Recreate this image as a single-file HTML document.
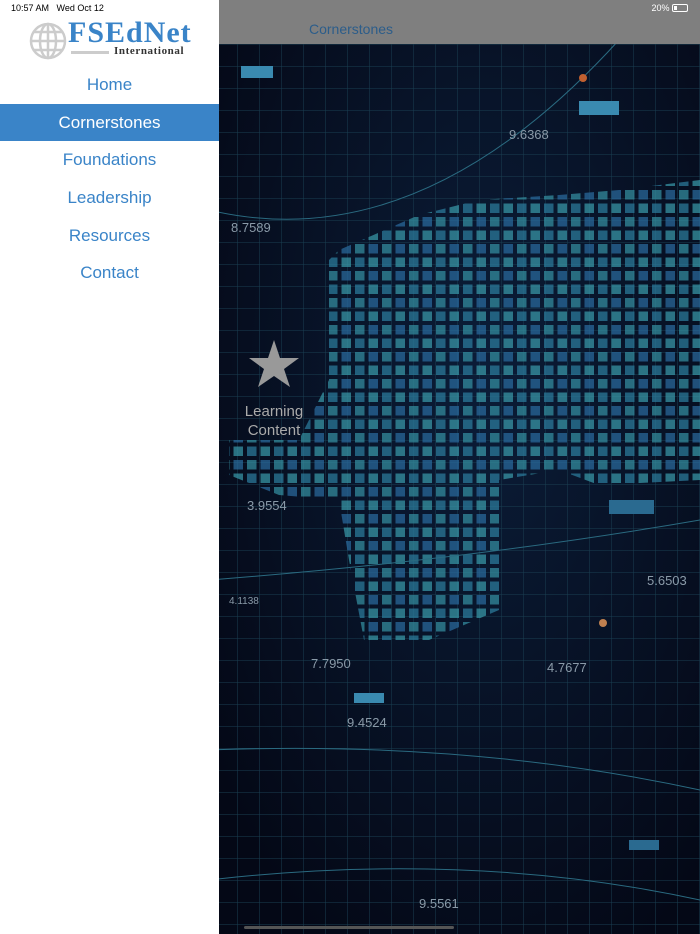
<!DOCTYPE html>
<html><head><meta charset="utf-8"><style>
*{margin:0;padding:0;box-sizing:border-box}
body{width:700px;height:934px;overflow:hidden;position:relative;font-family:"Liberation Sans",sans-serif;background:#fff}
.side{position:absolute;left:0;top:0;width:219px;height:934px;background:#fff}
.nav{position:absolute;left:0;width:219px;text-align:center;font-size:17px;color:#3a84c8}
.sel{background:#3a84c8;color:#fff}
.main{position:absolute;left:219px;top:0;width:481px;height:934px;background:#050c1c;overflow:hidden}
.hdr{position:absolute;left:219px;top:0;width:481px;height:44px;background:#7f7f7f}
</style></head><body>
<div class="main">
<svg width="481" height="934" style="position:absolute;left:0;top:0">
<defs>
<radialGradient id="g" cx="0.55" cy="0.4" r="0.7"><stop offset="0" stop-color="#0b1d38"/><stop offset="1" stop-color="#040816"/></radialGradient>
<pattern id="gr" width="22" height="22" patternUnits="userSpaceOnUse" x="-4" y="0"><path d="M0 0H22M0 0V22" stroke="#1a3f52" stroke-width="1" fill="none"/></pattern>
<pattern id="sq" width="27" height="27" patternUnits="userSpaceOnUse" x="0" y="0"><rect x="1" y="1" width="9.5" height="9.5" fill="#3592a4"/><rect x="14.5" y="1" width="9.5" height="9.5" fill="#2a6ca0"/><rect x="1" y="14.5" width="9.5" height="9.5" fill="#2c7fa0"/><rect x="14.5" y="14.5" width="9.5" height="9.5" fill="#3a9cac"/></pattern>
<clipPath id="c"><polygon points="120,250 200,215 260,200 340,195 400,190 481,180 481,480 380,485 340,470 280,480 280,610 210,640 145,640 130,560 120,500 60,495 10,475 10,440 80,440 110,380 110,260"/></clipPath>
</defs>
<rect width="481" height="934" fill="url(#g)"/>
<rect width="481" height="934" fill="url(#gr)"/>
<rect width="481" height="934" fill="url(#sq)" clip-path="url(#c)" opacity="0.7"/>
<path d="M-10 210 Q200 260 400 40" stroke="#2a6a80" fill="none"/>
<path d="M-10 580 Q250 560 481 520" stroke="#2a6a80" fill="none"/>
<path d="M-10 750 Q250 740 481 790" stroke="#2a6a80" fill="none"/>
<path d="M-10 880 Q250 850 481 900" stroke="#2a6a80" fill="none"/>
<rect x="22" y="66" width="32" height="12" fill="#3a8ab0"/>
<rect x="360" y="101" width="40" height="14" fill="#3a8ab0"/>
<rect x="135" y="693" width="30" height="10" fill="#3a8ab0"/>
<rect x="390" y="500" width="45" height="14" fill="#2a6a90"/>
<rect x="410" y="840" width="30" height="10" fill="#2a6a90"/>
<circle cx="364" cy="78" r="4" fill="#c06030"/>
<circle cx="384" cy="623" r="4" fill="#c08050"/>
<g fill="#8a9aa8" font-size="13" font-family="Liberation Sans Narrow,Liberation Sans,sans-serif">
<text x="290" y="139">9.6368</text><text x="12" y="232">8.7589</text><text x="28" y="510">3.9554</text>
<text x="428" y="585">5.6503</text><text x="92" y="668">7.7950</text><text x="328" y="672">4.7677</text>
<text x="128" y="727">9.4524</text><text x="200" y="908">9.5561</text><text x="10" y="604" font-size="10">4.1138</text>
</g>
<polygon points="55,340 61,358 80,358 65,369 71,387 55,376 39,387 45,369 30,358 49,358" fill="#999"/>
<text x="55" y="416" fill="#aaa" font-size="15" text-anchor="middle">Learning</text>
<text x="55" y="435" fill="#aaa" font-size="15" text-anchor="middle">Content</text>
<rect x="25" y="926" width="210" height="3" rx="1.5" fill="#555"/>
</svg>
</div>
<div class="hdr">
<div style="position:absolute;left:90px;top:21px;font-size:14px;color:#2c5d8a">Cornerstones</div>
<div style="position:absolute;right:12px;top:3px;font-size:9px;color:#fff">20% <span style="display:inline-block;width:16px;height:8px;border:1px solid #fff;border-radius:2px;vertical-align:-1px;position:relative"><span style="position:absolute;left:1px;top:1px;width:3px;height:4px;background:#fff"></span></span></div>
</div>
<div class="side">
<div style="position:absolute;left:11px;top:3px;font-size:9px;color:#000">10:57 AM&nbsp;&nbsp;&nbsp;Wed Oct 12</div>
<svg width="40" height="40" style="position:absolute;left:28px;top:21px" viewBox="0 0 40 40" fill="none" stroke="#ccc" stroke-width="2.5"><circle cx="20" cy="20" r="17"/><ellipse cx="20" cy="20" rx="8" ry="17"/><path d="M3 20H37M6 11H34M6 29H34M20 3V37"/></svg>
<div style="position:absolute;left:68px;top:16px;font-family:'Liberation Serif',serif;font-weight:bold;font-size:30px;color:#3a84c8;letter-spacing:1px">FSEdNet</div>
<div style="position:absolute;left:71px;top:51px;width:38px;height:3px;background:#ccc"></div>
<div style="position:absolute;left:114px;top:45px;font-family:'Liberation Serif',serif;font-weight:bold;font-size:11px;color:#333;letter-spacing:0.6px">International</div>
<div class="nav" style="top:75px">Home</div>
<div class="nav sel" style="top:104px;height:37px;line-height:37px">Cornerstones</div>
<div class="nav" style="top:150px">Foundations</div>
<div class="nav" style="top:188px">Leadership</div>
<div class="nav" style="top:226px">Resources</div>
<div class="nav" style="top:263px">Contact</div>
</div>
</body></html>
